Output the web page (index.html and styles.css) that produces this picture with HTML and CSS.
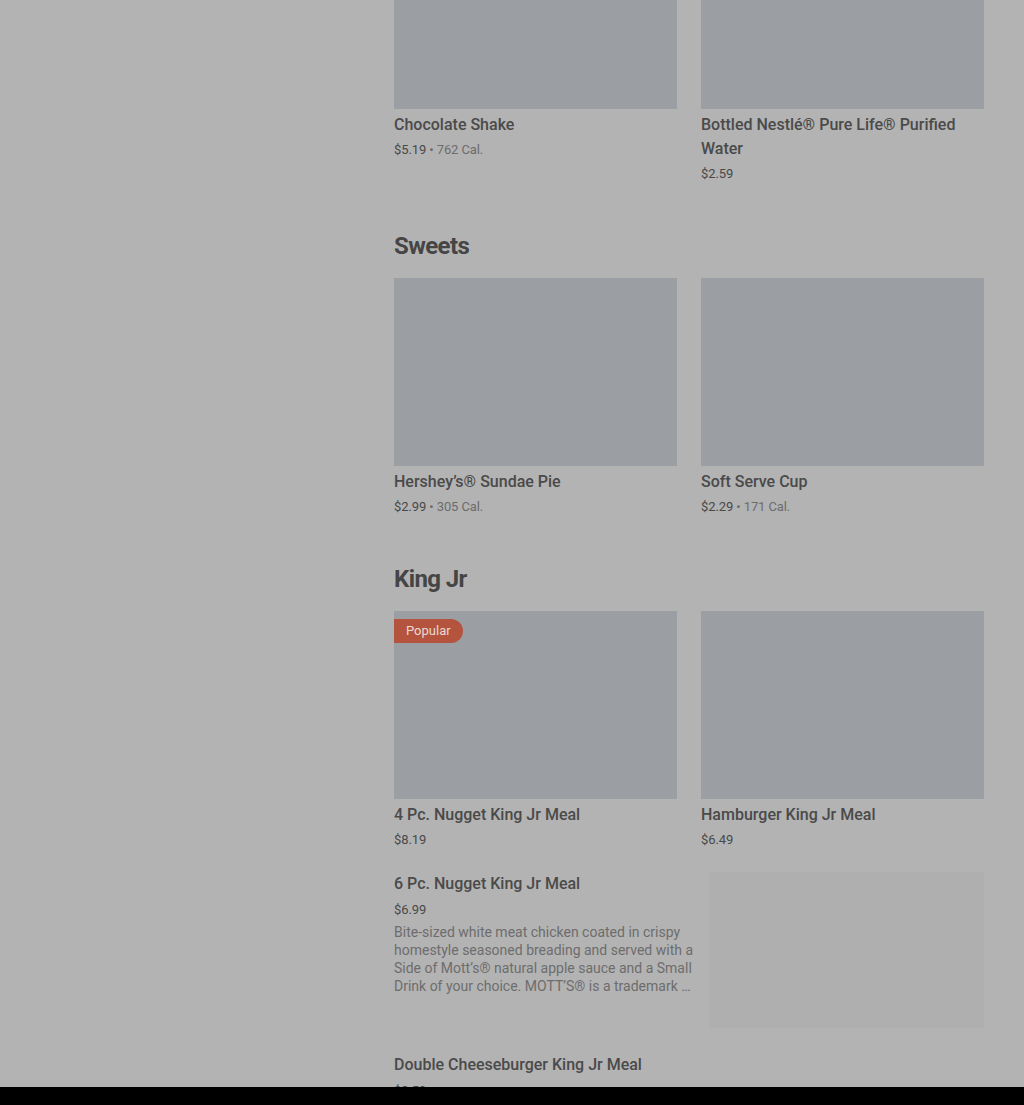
FILE: index.html
```html
<!DOCTYPE html>
<html lang="en">
<head>
<meta charset="utf-8">
<title>Menu</title>
<link rel="stylesheet" href="styles.css">
</head>
<body>
<div class="layout">
  <aside class="sidebar"></aside>
  <main class="menu">
    <section class="section first">
      <div class="grid">
        <div class="card">
          <div class="thumb"></div>
          <div class="title">Chocolate Shake</div>
          <div class="price">$5.19 <span class="cal">• 762 Cal.</span></div>
        </div>
        <div class="card">
          <div class="thumb"></div>
          <div class="title">Bottled Nestlé® Pure Life® Purified Water</div>
          <div class="price">$2.59</div>
        </div>
      </div>
    </section>

    <section class="section">
      <h2 class="heading">Sweets</h2>
      <div class="grid">
        <div class="card">
          <div class="thumb"></div>
          <div class="title">Hershey’s® Sundae Pie</div>
          <div class="price">$2.99 <span class="cal">• 305 Cal.</span></div>
        </div>
        <div class="card">
          <div class="thumb"></div>
          <div class="title">Soft Serve Cup</div>
          <div class="price">$2.29 <span class="cal">• 171 Cal.</span></div>
        </div>
      </div>
    </section>

    <section class="section">
      <h2 class="heading">King Jr</h2>
      <div class="grid">
        <div class="card">
          <div class="thumb"><span class="badge">Popular</span></div>
          <div class="title">4 Pc. Nugget King Jr Meal</div>
          <div class="price">$8.19</div>
        </div>
        <div class="card">
          <div class="thumb"></div>
          <div class="title">Hamburger King Jr Meal</div>
          <div class="price">$6.49</div>
        </div>
      </div>
      <div class="list">
        <div class="row">
          <div class="info">
            <div class="title">6 Pc. Nugget King Jr Meal</div>
            <div class="price row-price">$6.99</div>
            <p class="desc">Bite-sized white meat chicken coated in crispy homestyle seasoned breading and served with a Side of Mott’s® natural apple sauce and a Small Drink of your choice. MOTT’S® is a trademark of Mott’s LLP, used under license.</p>
          </div>
          <div class="row-thumb"></div>
        </div>
        <div class="row">
          <div class="info">
            <div class="title">Double Cheeseburger King Jr Meal</div>
            <div class="price row-price">$8.59</div>
          </div>
        </div>
      </div>
    </section>
  </main>
</div>
<div class="bottom-bar"></div>
</body>
</html>
```

FILE: styles.css
```css
* { box-sizing: border-box; }

html, body {
  margin: 0;
  padding: 0;
  background: #b3b3b3;
  font-family: Roboto, "Liberation Sans", Arial, sans-serif;
  color: #474747;
}

.layout {
  display: flex;
  height: 1105px;
  overflow: hidden;
}

.sidebar {
  width: 394px;
  flex: none;
}

.menu {
  width: 590px;
  flex: none;
  margin-top: -79px;
}

.heading {
  margin: 46px 0 16px;
  height: 32px;
  line-height: 32px;
  font-size: 24px;
  font-weight: 700;
  letter-spacing: -0.6px;
  color: #454545;
}

.grid {
  display: grid;
  grid-template-columns: 283px 283px;
  column-gap: 24px;
}

.card { display: flex; flex-direction: column; }

.thumb {
  position: relative;
  height: 188px;
  background: #9b9ea2;
}

.badge {
  position: absolute;
  top: 8px;
  left: 0;
  height: 24px;
  line-height: 24px;
  padding: 0 12px;
  border-radius: 0 12px 12px 0;
  background: #b4543e;
  color: #ead8d3;
  font-size: 13px;
}

.title {
  margin-top: 4px;
  font-size: 16px;
  line-height: 24px;
  font-weight: 500;
  color: #4a4a4a;
}

.price {
  margin-top: 3px;
  font-size: 13px;
  line-height: 20px;
  color: #494949;
  letter-spacing: -0.1px;
}

.cal { color: #6c6c6c; }

.list {
  margin-top: 22px;
  display: flex;
  flex-direction: column;
  gap: 25px;
}

.row {
  display: flex;
  gap: 12px;
}

.row .title { margin-top: 0; }

.info {
  width: 303px;
  flex: none;
}

.row-price { margin-top: 4px; }

.desc {
  margin: 3px 0 0;
  font-size: 14px;
  line-height: 18px;
  color: #6d6d6d;
  display: -webkit-box;
  -webkit-line-clamp: 4;
  -webkit-box-orient: vertical;
  overflow: hidden;
}

.row-thumb {
  width: 275px;
  height: 156px;
  background: #afafaf;
}

.bottom-bar {
  position: fixed;
  left: 0;
  right: 0;
  bottom: 0;
  height: 18px;
  background: #000;
}
```
